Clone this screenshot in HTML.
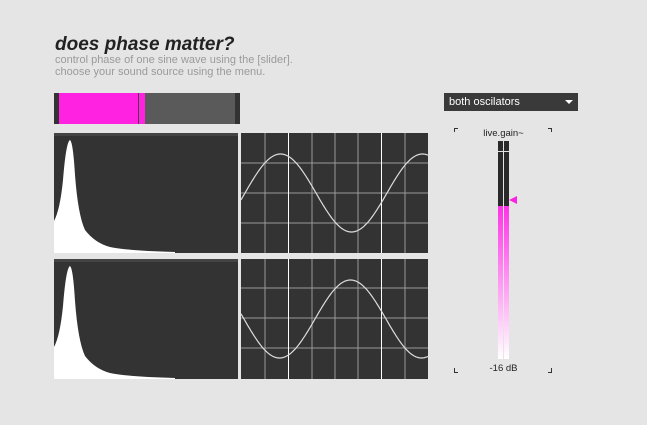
<!DOCTYPE html>
<html><head><style>
body{margin:0;width:647px;height:425px;background:#e5e5e5;position:relative;overflow:hidden;font-family:"Liberation Sans",sans-serif}
.a{position:absolute}
</style></head><body>
<div class="a" style="left:55px;top:34px;font-size:19px;font-weight:bold;font-style:italic;color:#222">does phase matter?</div>
<div class="a" style="left:55px;top:55px;font-size:11px;line-height:11.5px;color:#9a9a9a">control phase of one sine wave using the [slider].<br>choose your sound source using the menu.</div>
<div class="a" style="left:54px;top:93px;width:186px;height:31px;background:#333"></div>
<div class="a" style="left:59px;top:93px;width:176px;height:31px;background:#5a5a5a"></div>
<div class="a" style="left:59px;top:93px;width:86px;height:31px;background:#ff22e0"></div>
<div class="a" style="left:138px;top:93px;width:1px;height:31px;background:#444"></div>
<div class="a" style="left:444px;top:93px;width:134px;height:18px;background:#3a3a3a;color:#fff;font-size:11px;line-height:18px;"><span style="margin-left:5px">both oscilators</span><span style="position:absolute;right:5px;top:7px;border-left:4px solid transparent;border-right:4px solid transparent;border-top:4px solid #fff"></span></div>
<svg class="a" style="left:0;top:0" width="647" height="425">
<g fill="#333"><rect x="54" y="133" width="184" height="120"/><rect x="54" y="259" width="184" height="120"/><rect x="241" y="133" width="187" height="120"/><rect x="241" y="259" width="187" height="120"/></g>
<rect x="54" y="133" width="184" height="3" fill="#444"/><rect x="54" y="259" width="184" height="3" fill="#444"/>
<path d="M54 253 L54 221 Q60 210 63 180 Q66 142 70 140 Q73 142 75 175 Q78 215 85 230 Q95 243 110 247 Q130 251 175 252 L175 253 Z" fill="#fff"/>
<path d="M54 379 L54 347 Q60 336 63 306 Q66 268 70 266 Q73 268 75 301 Q78 341 85 356 Q95 369 110 373 Q130 377 175 378 L175 379 Z" fill="#fff"/>
<g stroke="#999" stroke-width="1"><path d="M265 133V253M312 133V253M335 133V253M358 133V253M405 133V253M241 163H428M241 193H428M241 223H428"/>
<path d="M265 259V379M312 259V379M335 259V379M358 259V379M405 259V379M241 288H428M241 318H428M241 348H428"/></g>
<g stroke="#fff"><path d="M288.5 133V253M381.5 133V253M288.5 259V379M381.5 259V379"/></g>
<path id="s1" fill="none" stroke="#ddd" stroke-width="1.2" d=""/>
<path id="s2" fill="none" stroke="#ddd" stroke-width="1.2" d=""/>
<rect x="498" y="141" width="11" height="218" fill="#2a2a2a"/>
<defs><linearGradient id="g" x1="0" y1="0" x2="0" y2="1"><stop offset="0" stop-color="#ff33e6"/><stop offset="1" stop-color="#fff"/></linearGradient></defs>
<rect x="498" y="206" width="11" height="153" fill="url(#g)"/>
<rect x="503" y="141" width="1" height="218" fill="#e5e5e5"/>
<rect x="498" y="151" width="11" height="1" fill="#e5e5e5"/>
<polygon points="509,200 517,196 517,204" fill="#ff22e0"/>
<g stroke="#333" fill="none"><path d="M454.5 132V128.5H458M551.5 132V128.5H548M454.5 368V372.5H458M551.5 368V372.5H548"/></g>
<text x="503.5" y="136" font-size="9.5" text-anchor="middle" fill="#222" font-family="Liberation Sans">live.gain~</text>
<text x="503.5" y="371" font-size="9.5" text-anchor="middle" fill="#222" font-family="Liberation Sans">-16 dB</text>
</svg>
<script>
function w(id,y0,ph){var d="";for(var x=241;x<=428;x++){var y=y0-39*Math.sin((x-ph)*2*Math.PI/142);d+=(x==241?"M":"L")+x+" "+y.toFixed(1);}document.getElementById(id).setAttribute("d",d);}
w("s1",193,245);w("s2",319,315);
</script>
</body></html>
